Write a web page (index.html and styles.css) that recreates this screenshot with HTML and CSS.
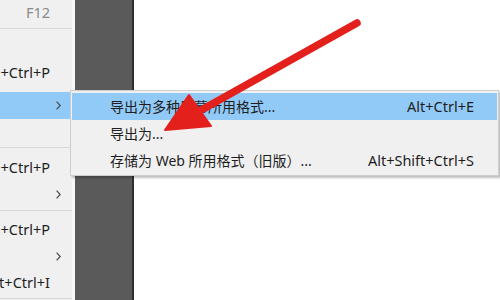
FILE: index.html
```html
<!DOCTYPE html>
<html lang="zh-CN">
<head>
<meta charset="utf-8">
<title>导出菜单</title>
<link rel="stylesheet" href="styles.css">
</head>
<body>
<div class="app">
  <div class="menu">
    <div class="item"><span class="key key-dim">F12</span></div>
    <div class="sep"></div>
    <div class="item"></div>
    <div class="item"><span class="key">+Ctrl+P</span></div>
    <div class="gap"></div>
    <div class="item item-sub item-active"><svg class="chev" width="5" height="9" viewBox="0 0 5 9"><path d="M0.6 0.6 L4.2 4.5 L0.6 8.4" /></svg></div>
    <div class="item"></div>
    <div class="sep sep-b"></div>
    <div class="item"><span class="key">+Ctrl+P</span></div>
    <div class="item item-sub"><svg class="chev" width="5" height="9" viewBox="0 0 5 9"><path d="M0.6 0.6 L4.2 4.5 L0.6 8.4" /></svg></div>
    <div class="sep sep-c"></div>
    <div class="item"><span class="key">+Ctrl+P</span></div>
    <div class="item item-sub"><svg class="chev" width="5" height="9" viewBox="0 0 5 9"><path d="M0.6 0.6 L4.2 4.5 L0.6 8.4" /></svg></div>
    <div class="item"><span class="key">Shift+Ctrl+I</span></div>
    <div class="sep sep-d"></div>
  </div>
  <div class="strip"></div>
  <div class="doc"></div>
</div>

<div class="submenu">
  <div class="sub-item sub-active"><span class="label">导出为多种屏幕所用格式...</span><span class="sc">Alt+Ctrl+E</span></div>
  <div class="sub-item"><span class="label">导出为...</span><span class="sc"></span></div>
  <div class="sub-item"><span class="label">存储为 Web 所用格式（旧版）...</span><span class="sc">Alt+Shift+Ctrl+S</span></div>
</div>

<svg class="arrow" width="500" height="300" viewBox="0 0 500 300">
  <line x1="357" y1="23" x2="196" y2="113" stroke="#e3201b" stroke-width="7.5" stroke-linecap="round"/>
  <polygon points="165,130 189,95 211,126" fill="#e3201b" stroke="#e3201b" stroke-width="2" stroke-linejoin="round"/>
</svg>
</body>
</html>
```

FILE: styles.css
```css
html, body {
  margin: 0;
  padding: 0;
}
body {
  width: 500px;
  height: 300px;
  overflow: hidden;
  position: relative;
  font-family: "Noto Sans", "Noto Sans CJK SC", sans-serif;
  font-size: 14px;
  color: #1e1e1e;
  background: #ffffff;
}
.app {
  display: flex;
  height: 300px;
}
.menu {
  width: 72px;
  background: #f0f0f0;
  border-right: 3px solid #f8f8f8;
  display: flex;
  flex-direction: column;
  overflow: hidden;
}
.item {
  height: 27px;
  flex: none;
  display: flex;
  align-items: center;
  justify-content: flex-end;
  padding-right: 22px;
  overflow: hidden;
  white-space: nowrap;
}
.item:first-child {
  height: 25px;
}
.item-sub {
  padding-right: 11px;
  height: 26px;
}
.item-active {
  background: #91c9f7;
  height: 27px;
}
.key {
  flex: none;
  line-height: 1;
  font-size: 14.5px;
}
.key-dim {
  color: #8a8a8a;
}
.chev {
  display: block;
  fill: none;
  stroke: #4a4a4a;
  stroke-width: 1.2;
}
.sep {
  flex: none;
  height: 1px;
  background: #d8d8d8;
  margin: 3px 0 3px;
}
.sep-b {
  margin: 1px 0 6px;
}
.sep-c {
  margin: 3px 0 5px;
}
.sep-d {
  margin: 2px 0 0;
}
.gap {
  flex: none;
  height: 6px;
}
.strip {
  width: 57px;
  background: #5a5a5a;
  border-right: 2px solid #2f2f2f;
  flex: none;
}
.doc {
  flex: 1;
  background: #ffffff;
}
.submenu {
  position: absolute;
  left: 70px;
  top: 90px;
  width: 425px;
  padding: 2px 1px 1px;
  background: #f0f0f0;
  border: 1px solid #cdcdcd;
  box-shadow: 2px 2px 2px rgba(0, 0, 0, 0.25);
}
.sub-item {
  height: 27px;
  display: flex;
  align-items: center;
  justify-content: space-between;
  padding: 0 23px 0 38px;
  white-space: nowrap;
}
.sub-active {
  background: #91c9f7;
}
.label {
  line-height: 1;
}
.sc {
  line-height: 1;
  font-size: 14.5px;
}
.arrow {
  position: absolute;
  left: 0;
  top: 0;
  pointer-events: none;
}
```
